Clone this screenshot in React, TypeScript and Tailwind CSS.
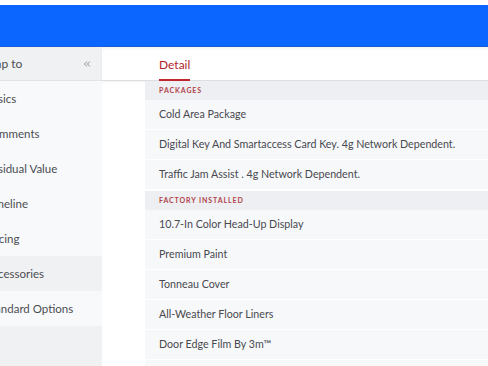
import { ChevronsLeft } from 'lucide-react';

const navItems = [
  'Basics',
  'Comments',
  'Residual Value',
  'Timeline',
  'Pricing',
  'Accessories',
  'Standard Options',
];

const sections = [
  {
    title: 'Packages',
    items: [
      'Cold Area Package',
      'Digital Key And Smartaccess Card Key. 4g Network Dependent.',
      'Traffic Jam Assist . 4g Network Dependent.',
    ],
  },
  {
    title: 'Factory Installed',
    items: [
      '10.7-In Color Head-Up Display',
      'Premium Paint',
      'Tonneau Cover',
      'All-Weather Floor Liners',
      'Door Edge Film By 3m™',
      'Mudguards',
    ],
  },
];

const SideNav = ({ active }: { active: string }) => {
  return (
    <aside className="w-[132px] -ml-[30px] shrink-0 flex flex-col bg-[#f0f1f3]">
      <div className="h-[34px] flex items-center pl-[10px] pr-[10px] text-[12px] text-[#4b4d52] border-b border-[#e2e4e8]">
        <span>Jump to</span>
        <ChevronsLeft className="ml-auto w-[10px] h-[10px] text-[#55585e]" strokeWidth={1.6} />
      </div>
      <ul className="flex flex-col">
        {navItems.map((item) => (
          <li
            key={item}
            className={`h-[35px] flex items-center pl-[15px] text-[11.5px] text-[#4b4d52] ${
              item === active ? 'bg-[#f0f1f3]' : 'bg-[#f8f9fa]'
            }`}
          >
            {item}
          </li>
        ))}
      </ul>
      <div className="flex-1" />
    </aside>
  );
};

const Section = ({
  title,
  items,
  first,
}: {
  title: string;
  items: string[];
  first?: boolean;
}) => {
  return (
    <section className={first ? '' : 'mt-px'}>
      <h3 className="h-[19px] flex items-center px-[14px] bg-[#eeeff2] text-[7px] font-bold uppercase tracking-[0.13em] text-[#b0434a]">
        {title}
      </h3>
      {items.map((item) => (
        <div
          key={item}
          className="h-[30px] flex items-center px-[14px] bg-[#f7f8fa] border-b border-white text-[10.7px] text-[#47494f] whitespace-nowrap"
        >
          {item}
        </div>
      ))}
    </section>
  );
};

export default function App() {
  return (
    <div
      className="w-[488px] h-[366px] overflow-hidden bg-white flex flex-col"
      style={{ fontFamily: 'Lato, "Noto Sans", sans-serif' }}
    >
      <div className="h-[5px] shrink-0 bg-white" />
      <header className="h-[42px] shrink-0 bg-[#0a66ff] border-b border-[#1d5cd6]" />
      <div className="flex flex-1 min-h-0">
        <SideNav active="Accessories" />
        <main className="flex-1 min-w-0 flex flex-col">
          <div className="h-[34px] shrink-0 flex items-end pl-[57px] border-b border-[#dcdee2] shadow-[0_1px_2px_rgba(0,0,0,0.06)] bg-gradient-to-b from-[#f3f5f8] to-white to-[12%]">
            <div className="pb-[8px] text-[12px] text-[#b0232b] border-b-2 border-[#c0262d] -mb-px leading-none pt-[2px]">
              Detail
            </div>
          </div>
          <div className="ml-[43px] flex flex-col">
            {sections.map((s, i) => (
              <Section key={s.title} title={s.title} items={s.items} first={i === 0} />
            ))}
          </div>
        </main>
      </div>
    </div>
  );
}
